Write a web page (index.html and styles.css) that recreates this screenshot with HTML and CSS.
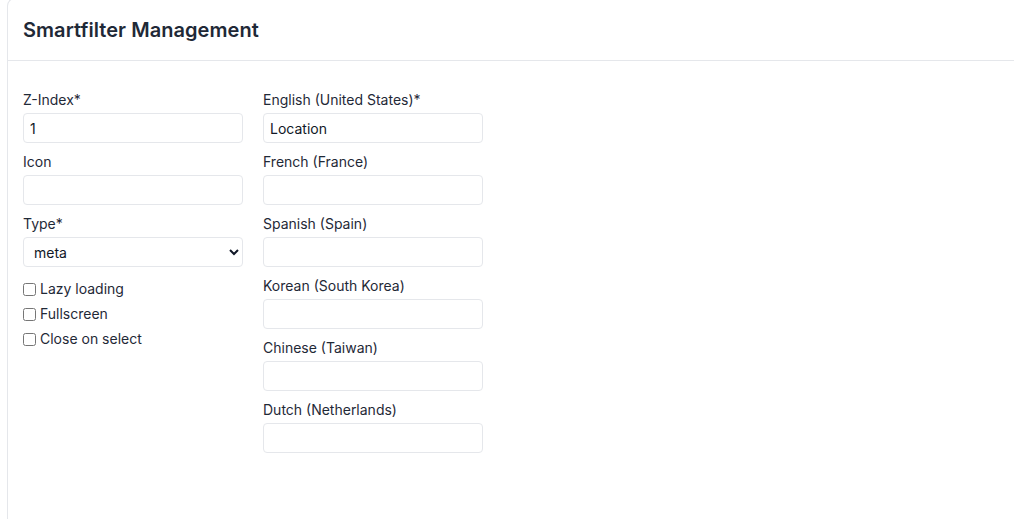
FILE: index.html
```html
<!DOCTYPE html>
<html lang="en">
<head>
  <meta charset="UTF-8">
  <title>Smartfilter Management</title>
  <link rel="stylesheet" href="styles.css">
</head>
<body>

  <!-- SMARTFILTER CARD -->
  <div class="card">
    <div class="card-header">
      <h1>Smartfilter Management</h1>
    </div>

    <div class="card-body">
      <!-- General settings -->
      <div class="col">
        <div class="field">
          <label for="zindex">Z-Index*</label>
          <input id="zindex" type="text" value="1">
        </div>
        <div class="field">
          <label for="icon">Icon</label>
          <input id="icon" type="text">
        </div>
        <div class="field">
          <label for="type">Type*</label>
          <select id="type">
            <option>meta</option>
          </select>
        </div>
        <div class="checks">
          <label class="check"><input type="checkbox"> Lazy loading</label>
          <label class="check"><input type="checkbox"> Fullscreen</label>
          <label class="check"><input type="checkbox"> Close on select</label>
        </div>
      </div>

      <!-- Translations -->
      <div class="col">
        <div class="field">
          <label for="en">English (United States)*</label>
          <input id="en" type="text" value="Location">
        </div>
        <div class="field">
          <label for="fr">French (France)</label>
          <input id="fr" type="text">
        </div>
        <div class="field">
          <label for="es">Spanish (Spain)</label>
          <input id="es" type="text">
        </div>
        <div class="field">
          <label for="ko">Korean (South Korea)</label>
          <input id="ko" type="text">
        </div>
        <div class="field">
          <label for="zh">Chinese (Taiwan)</label>
          <input id="zh" type="text">
        </div>
        <div class="field">
          <label for="nl">Dutch (Netherlands)</label>
          <input id="nl" type="text">
        </div>
      </div>
    </div>
  </div>

</body>
</html>
```

FILE: styles.css
```css
/* Page: plain white, Inter everywhere */
body {
  margin: 0;
  padding: 0 0 0 7px;
  height: 100vh;
  overflow: hidden;
  background: #ffffff;
  font-family: 'Inter', 'Noto Sans', sans-serif;
  color: #1f2937;
}

/* Card fills the rest of the window; its right and bottom edges sit off-screen */
.card {
  box-sizing: border-box;
  margin-top: -2px;
  height: calc(100vh + 2px);
  border: 1px solid #e5e7eb;
  border-right: none;
  border-bottom: none;
  border-radius: 8px 0 0 0;
  background: #fff;
}

.card-header {
  height: 61px;
  padding: 0 15px;
  display: flex;
  align-items: center;
  border-bottom: 1px solid #e5e7eb;
}

.card-header h1 {
  margin: 0;
  font-size: 20px;
  font-weight: 600;
  color: #1f2937;
  letter-spacing: 0.05px;
}

/* Two columns of fields */
.card-body {
  display: flex;
  gap: 20px;
  padding: 28px 15px;
}

.col {
  width: 220px;
  display: flex;
  flex-direction: column;
}

.field {
  display: flex;
  flex-direction: column;
  margin-bottom: 8px;
}

.field label {
  font-size: 14px;
  line-height: 20px;
  margin-top: 1px;
  margin-bottom: 3px;
  color: #1f2937;
}

.field input,
.field select {
  box-sizing: border-box;
  width: 220px;
  height: 30px;
  margin: 0;
  padding: 0 6px;
  border: 1px solid #e5e7eb;
  border-radius: 4px;
  background: #fff;
  font-family: inherit;
  font-size: 14px;
  color: #111827;
  outline: none;
}

.field select {
  padding: 0 4px 0 6px;
}

/* Checkbox list */
.checks {
  display: flex;
  flex-direction: column;
  gap: 5px;
  margin-top: 4px;
}

.check {
  display: flex;
  align-items: center;
  gap: 4px;
  font-size: 14px;
  line-height: 20px;
  color: #1f2937;
}

.check input {
  margin: 0;
  width: 13px;
  height: 13px;
}
```
